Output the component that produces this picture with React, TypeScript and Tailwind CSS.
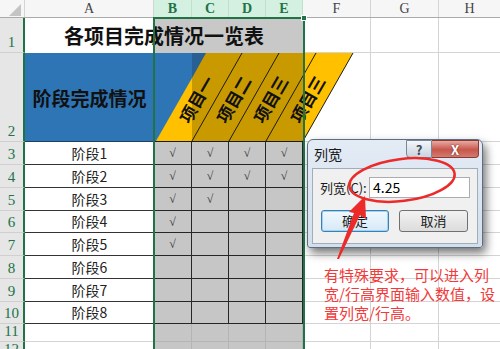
import React from "react";

const CJK = "font-['Noto_Sans_CJK_SC','Noto_Sans',sans-serif]";
const SERIF = "font-['Liberation_Serif','DejaVu_Serif',serif]";

const stages = [
    { name: "阶段1", num: 3, h: "h-[23px]", checks: [1, 1, 1, 1] },
    { name: "阶段2", num: 4, h: "h-[23px]", checks: [1, 1, 1, 1] },
    { name: "阶段3", num: 5, h: "h-[23px]", checks: [1, 1, 0, 0] },
    { name: "阶段4", num: 6, h: "h-[22px]", checks: [1, 0, 0, 0] },
    { name: "阶段5", num: 7, h: "h-[23px]", checks: [1, 0, 0, 0] },
    { name: "阶段6", num: 8, h: "h-[23px]", checks: [0, 0, 0, 0] },
    { name: "阶段7", num: 9, h: "h-[23px]", checks: [0, 0, 0, 0] },
    { name: "阶段8", num: 10, h: "h-[22px]", checks: [0, 0, 0, 0] },
];

const selWidths = ["w-[38px]", "w-[37px]", "w-[37px]", "w-[37px]"];

const RowHead = ({ n }: { n: number }) => (
    <div
        className={`w-[25px] shrink-0 bg-[#e6e6e6] border-r-2 border-b border-r-[#217346] border-b-[#d0d0d0] flex items-end justify-center text-[15px] leading-[18px] text-[#217346] pb-[1px] ${SERIF}`}
    >
        {n}
    </div>
);

const PlainCells = () => (
    <>
        <div className="w-[68px] shrink-0 border-r border-b border-[#d4d4d4]" />
        <div className="w-[68px] shrink-0 border-r border-b border-[#d4d4d4]" />
        <div className="flex-1 border-b border-[#d4d4d4]" />
    </>
);

const HeaderSlants = () => {
    const labels = ["项目一", "项目二", "项目三", "项目三"];
    return (
        <svg className="absolute left-0 top-0 z-10" width="210" height="88" viewBox="0 0 210 88">
            <rect x="0" y="0" width="38" height="88" fill="#2e75b6" />
            <rect x="38" y="0" width="111" height="88" fill="#285f95" />
            <polygon points="2,88 38,88 38,25" fill="#ffc000" />
            <polygon points="38,25 38,88 149,88 149,0 52,0" fill="#c99a00" />
            <polygon points="149,88 199,0 149,0" fill="#ffc000" />
            {[38, 75, 112, 149].map((x) => (
                <line key={x} x1={x} y1="88" x2={x + 50} y2="0" stroke="#1a1a1a" strokeWidth="1" />
            ))}
            {labels.map((t, i) => {
                const cx = 42 + i * 37;
                const cy = 46;
                return (
                    <text
                        key={i}
                        x={cx}
                        y={cy}
                        transform={`rotate(-60 ${cx} ${cy})`}
                        textAnchor="middle"
                        dominantBaseline="central"
                        fontFamily="'Noto Sans CJK SC', sans-serif"
                        fontWeight="700"
                        fontSize="17"
                        fill="#111"
                    >
                        {t}
                    </text>
                );
            })}
        </svg>
    );
};

const Dialog = () => (
    <div className={`absolute left-[307px] top-[139px] z-20 w-[176px] h-[109px] rounded-t-[6px] rounded-b-[3px] border border-[#5d6e84] bg-[linear-gradient(to_bottom,#e3ebf5,#d4dfec)] shadow-[3px_5px_10px_rgba(0,0,0,0.55)] ${CJK}`}>
        <div className="flex h-[28px] items-start justify-between pl-[6px] pr-[3px]">
            <span className="mt-[6px] text-[14px] leading-[16px] text-[#1a1a1a]">列宽</span>
            <div className="flex">
                <div className="flex h-[18px] w-[26px] items-center justify-center rounded-bl-[4px] border border-[#7a8799] bg-[linear-gradient(to_bottom,#f4f6f9,#c9d3df)] text-[13px] font-bold leading-none text-[#3d4a5c]">
                    ?
                </div>
                <div className="flex h-[18px] w-[47px] items-center justify-center rounded-br-[4px] border border-l-0 border-[#8a3a33] bg-[linear-gradient(to_bottom,#e8aaa2,#c8564b_55%,#d27c70)] text-[13px] font-bold leading-none text-white [text-shadow:0_0_2px_#5a1a14]">
                    X
                </div>
            </div>
        </div>
        <div className="mx-[4px] h-[76px] border border-[#a2adba] bg-[#f0f0f0] px-[7px] pt-[8px]">
            <div className="flex items-center">
                <span className="w-[49px] text-[13px] leading-[20px] text-[#1a1a1a]">列宽(C):</span>
                <div className="flex h-[21px] w-[101px] items-center border border-[#abadb3] bg-white pl-[3px] text-[14px] text-black">
                    4.25
                </div>
            </div>
            <div className="mt-[12px] flex gap-[10px] pl-[1px]">
                <div className="flex h-[22px] w-[68px] items-center justify-center rounded-[3px] border border-[#3c7fb1] bg-[linear-gradient(to_bottom,#f2f8fd,#d6e9f7)] text-[13px] text-[#1a1a1a] shadow-[inset_0_0_0_1px_#9fd3f5]">
                    确定
                </div>
                <div className="flex h-[22px] w-[69px] items-center justify-center rounded-[3px] border border-[#707070] bg-[linear-gradient(to_bottom,#f2f2f2,#dcdcdc)] text-[13px] text-[#1a1a1a]">
                    取消
                </div>
            </div>
        </div>
    </div>
);

export default function App() {
    return (
        <div className={`relative h-[349px] w-[500px] overflow-hidden bg-white ${CJK}`}>
            {/* column headers */}
            <div className={`flex h-[18px] border-b border-[#ababab] bg-[#f6f6f6] text-[14px] leading-[17px] ${SERIF}`}>
                <div className="relative w-[25px] shrink-0 border-r border-[#d4d4d4]">
                    <svg className="absolute left-[9px] top-[4px]" width="12" height="12" viewBox="0 0 12 12">
                        <polygon points="12,0 12,12 0,12" fill="#c4c4c4" />
                    </svg>
                </div>
                <div className="w-[129px] shrink-0 border-r border-[#d4d4d4] text-center text-[#444]">A</div>
                {["B", "C", "D", "E"].map((c, i) => (
                    <div key={c} className={`${selWidths[i]} shrink-0 border-r border-[#bfe0cc] bg-[#d3f0e0] text-center font-bold text-[#217346]`}>
                        {c}
                    </div>
                ))}
                <div className="w-[68px] shrink-0 border-r border-[#d4d4d4] text-center text-[#444]">F</div>
                <div className="w-[68px] shrink-0 border-r border-[#d4d4d4] text-center text-[#444]">G</div>
                <div className="flex-1 text-center text-[#444]">H</div>
            </div>

            {/* row 1 */}
            <div className="flex h-[35px]">
                <RowHead n={1} />
                <div className="flex w-[278px] shrink-0 items-center justify-center bg-[linear-gradient(to_right,#fff_129px,#c8c8c8_129px)] text-[20px] font-bold text-[#111]">
                    各项目完成情况一览表
                </div>
                <PlainCells />
            </div>

            {/* row 2 */}
            <div className="flex h-[89px]">
                <RowHead n={2} />
                <div className="flex w-[129px] shrink-0 items-center justify-center border-b border-[#1f3f60] bg-[#2e75b6] pt-[2px] text-[19px] font-bold text-[#111]">
                    阶段完成情况
                </div>
                <div className="relative w-[149px] shrink-0 border-b border-[#1a1a1a]">
                    <HeaderSlants />
                </div>
                <PlainCells />
            </div>

            {/* stage rows */}
            {stages.map((s) => (
                <div key={s.name} className={`flex ${s.h}`}>
                    <RowHead n={s.num} />
                    <div className="flex w-[129px] shrink-0 items-center justify-center border-b border-[#333] bg-white text-[14px] text-[#222]">
                        {s.name}
                    </div>
                    {s.checks.map((c, i) => (
                        <div
                            key={i}
                            className={`${selWidths[i]} flex shrink-0 items-center justify-center border-r border-b border-[#262626] bg-[#c6c6c6] text-[12px] text-[#333] ${SERIF}`}
                        >
                            {c ? "√" : ""}
                        </div>
                    ))}
                    <PlainCells />
                </div>
            ))}

            {/* empty rows */}
            {[11, 12].map((n) => (
                <div key={n} className="flex h-[18px]">
                    <RowHead n={n} />
                    <div className="w-[129px] shrink-0 border-b border-[#d4d4d4] bg-white" />
                    {selWidths.map((w, i) => (
                        <div key={i} className={`${w} shrink-0 border-r border-b border-[#b4b4b4] bg-[#c6c6c6]`} />
                    ))}
                    <PlainCells />
                </div>
            ))}

            {/* selection border */}
            <div className="absolute left-[153px] top-[17px] z-10 h-[340px] w-[152px] border-2 border-b-0 border-[#217346]" />
            <div className="absolute left-[301px] top-[15px] z-10 h-[6px] w-[6px] border border-white bg-[#217346]" />

            <Dialog />

            {/* annotation */}
            <svg className="absolute left-0 top-0 z-30" width="500" height="349" viewBox="0 0 500 349">
                <ellipse cx="402" cy="180" rx="53" ry="21" transform="rotate(-7 402 180)" fill="none" stroke="#ec2a2a" strokeWidth="2.5" />
                <polygon points="337,259 354,213 349,212 365,196 366,219 360,215 339,259" fill="#ec2a2a" />
            </svg>
            <div className="absolute left-[324px] top-[265px] z-30 text-[15px] leading-[19px] text-[#f23a3a]">
                <div className="whitespace-nowrap">有特殊要求，可以进入列</div>
                <div className="whitespace-nowrap">宽/行高界面输入数值，设</div>
                <div className="whitespace-nowrap">置列宽/行高。</div>
            </div>
        </div>
    );
}
